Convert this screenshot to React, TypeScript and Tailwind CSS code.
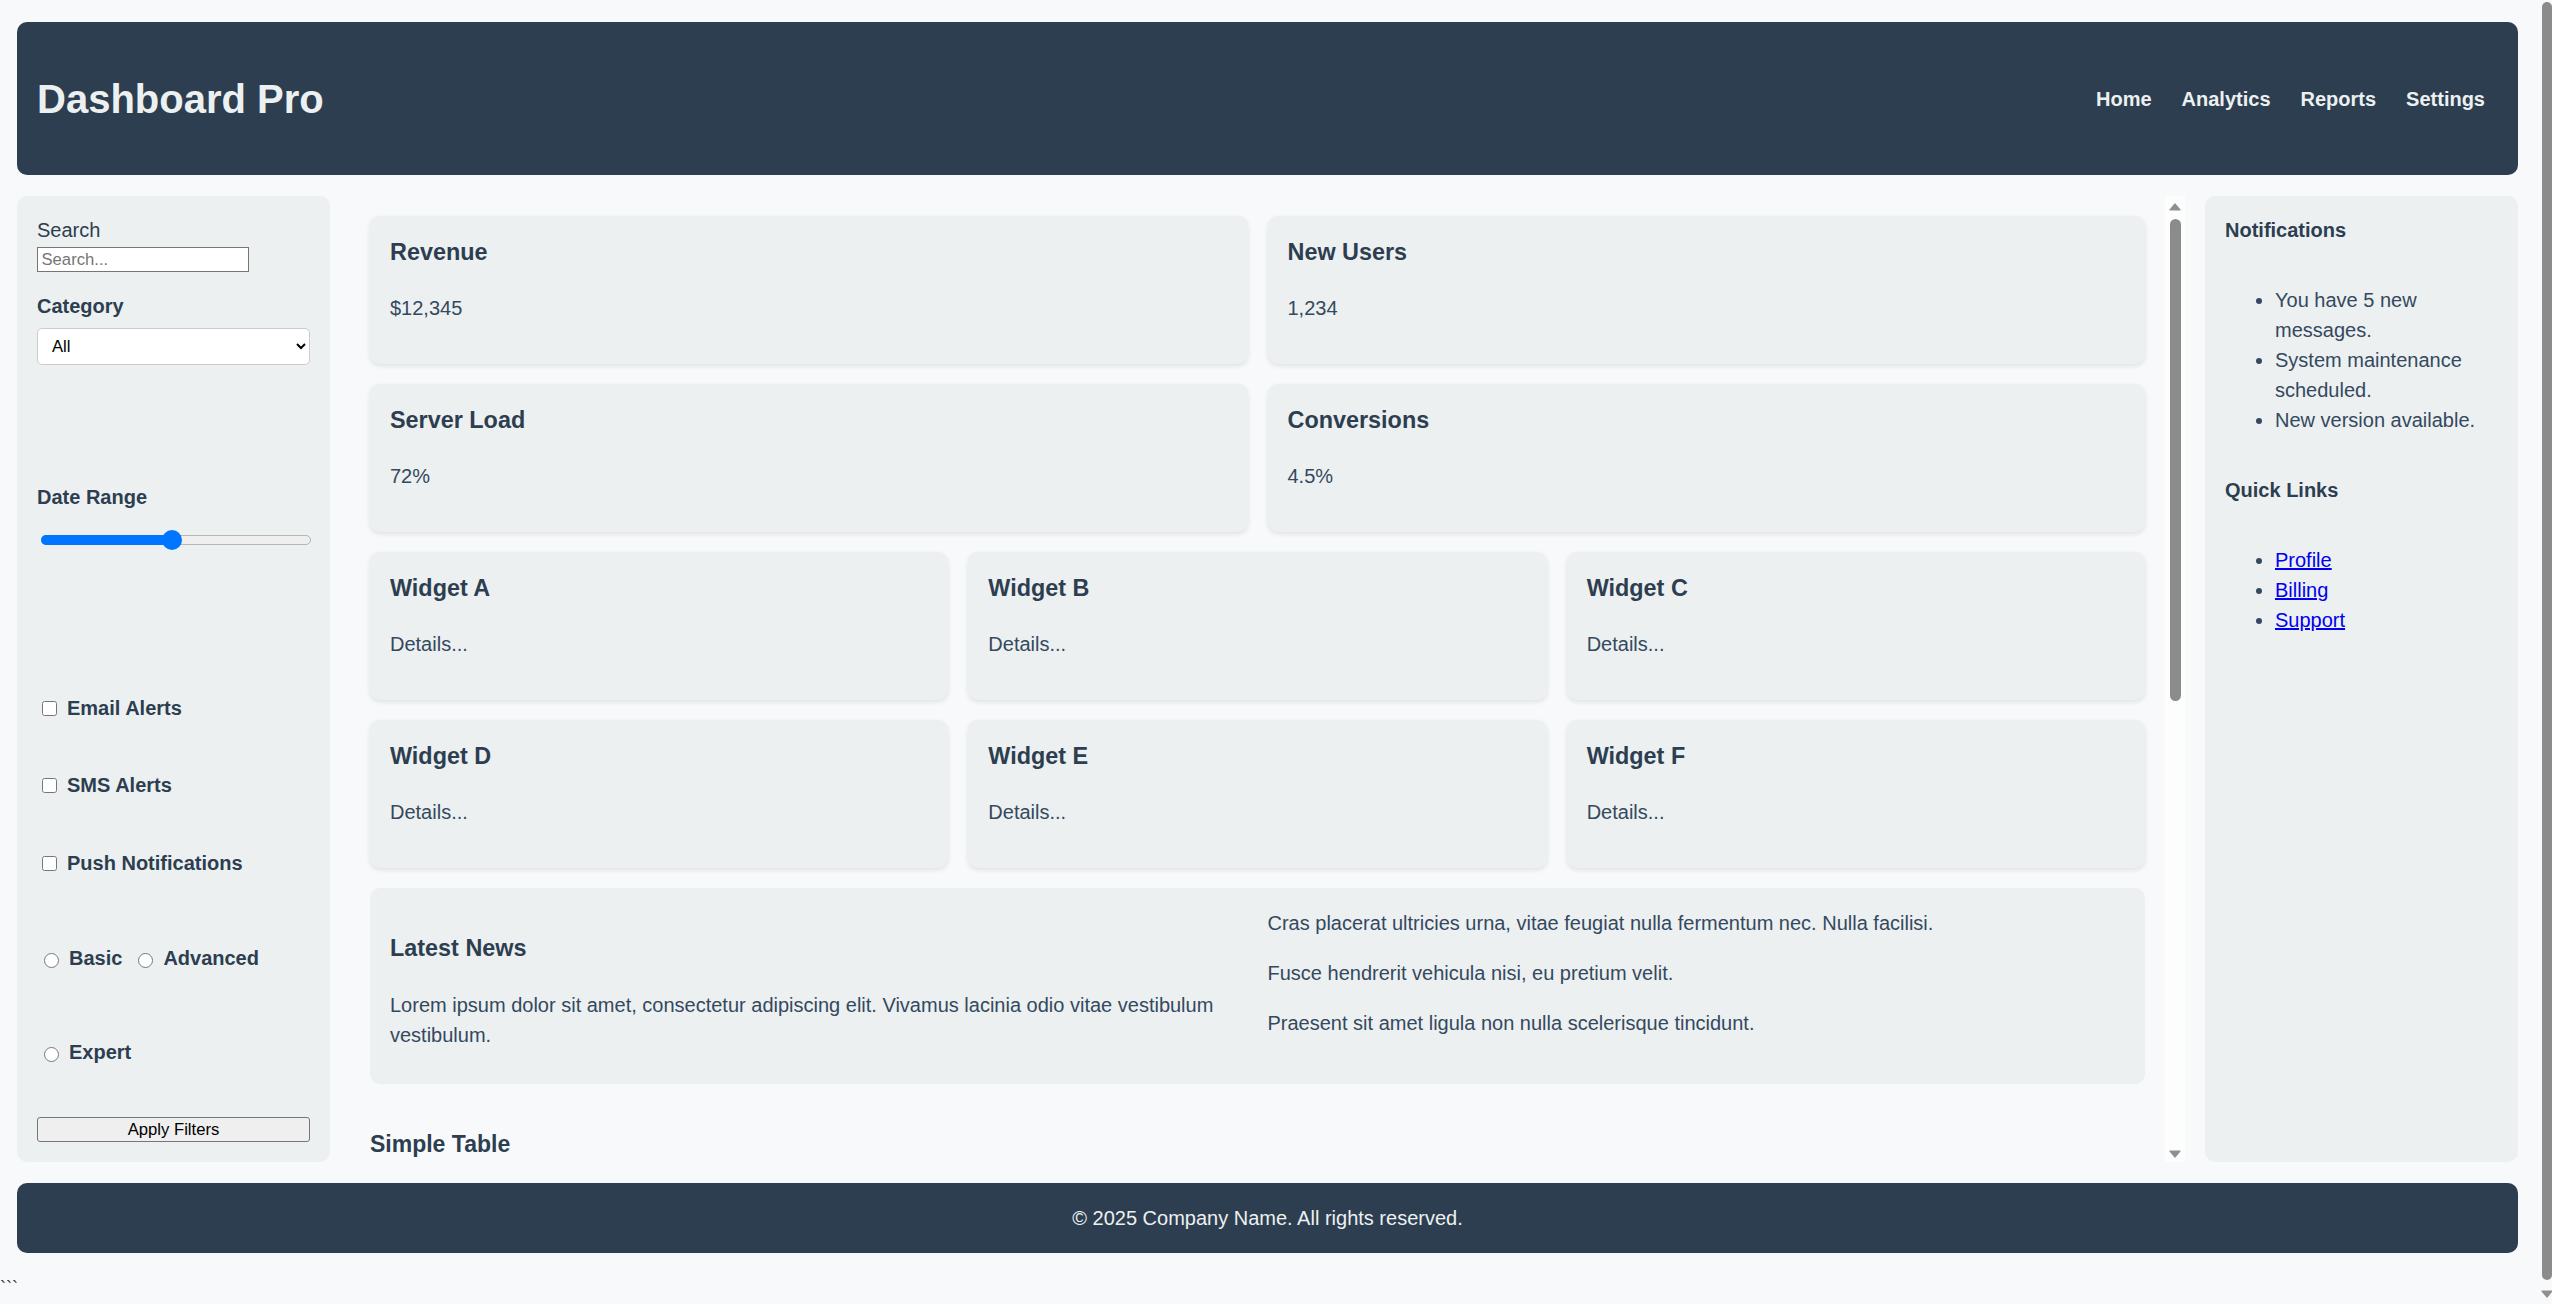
import React from 'react';

const navLinks = ['Home', 'Analytics', 'Reports', 'Settings'];

const statCards = [
  { title: 'Revenue', value: '$12,345' },
  { title: 'New Users', value: '1,234' },
  { title: 'Server Load', value: '72%' },
  { title: 'Conversions', value: '4.5%' },
];

const widgets = ['Widget A', 'Widget B', 'Widget C', 'Widget D', 'Widget E', 'Widget F'];

const tableRows = [
  ['1', 'Alice Johnson', 'Admin', 'Active'],
  ['2', 'Bob Smith', 'Editor', 'Active'],
  ['3', 'Carol White', 'Viewer', 'Inactive'],
  ['4', 'David Brown', 'Editor', 'Active'],
  ['5', 'Eve Davis', 'Viewer', 'Pending'],
  ['6', 'Frank Miller', 'Admin', 'Active'],
  ['7', 'Grace Lee', 'Viewer', 'Active'],
  ['8', 'Henry Wilson', 'Editor', 'Inactive'],
  ['9', 'Ivy Moore', 'Viewer', 'Active'],
  ['10', 'Jack Taylor', 'Editor', 'Pending'],
  ['11', 'Kate Anderson', 'Viewer', 'Active'],
  ['12', 'Liam Thomas', 'Admin', 'Active'],
  ['13', 'Mia Jackson', 'Viewer', 'Inactive'],
  ['14', 'Noah Martin', 'Editor', 'Active'],
  ['15', 'Olivia Clark', 'Viewer', 'Active'],
  ['16', 'Paul Lewis', 'Editor', 'Pending'],
  ['17', 'Quinn Walker', 'Viewer', 'Active'],
];

function ArrowUp({ className = '' }: { className?: string }) {
  return (
    <svg width="12" height="8" viewBox="0 0 12 8" className={className}>
      <path d="M6 1 L11 7 L1 7 Z" fill="#8f8f8f" stroke="#8f8f8f" strokeWidth="1.2" strokeLinejoin="round" />
    </svg>
  );
}

function ArrowDown({ className = '' }: { className?: string }) {
  return (
    <svg width="12" height="8" viewBox="0 0 12 8" className={className}>
      <path d="M1 1 L11 1 L6 7 Z" fill="#8f8f8f" stroke="#8f8f8f" strokeWidth="1.2" strokeLinejoin="round" />
    </svg>
  );
}

function StatCard({ title, value }: { title: string; value: string }) {
  return (
    <div className="rounded-[10px] bg-[#ecf0f1] px-[20px] pt-[19px] pb-[41px] shadow-[0_2px_5px_rgba(0,0,0,0.1)]">
      <h3 className="text-[23.4px] font-bold leading-[35px] text-[#2c3e50]">{title}</h3>
      <p className="mt-[23px] text-[20px] leading-[30px] text-[#34495e]">{value}</p>
    </div>
  );
}

function Sidebar() {
  return (
    <aside className="w-[313px] shrink-0 rounded-[10px] bg-[#ecf0f1] px-[20px] pt-[23px] text-[20px] leading-[23px] text-[#2c3e50]">
      <label className="block">Search</label>
      <input
        type="text"
        placeholder="Search..."
        className="mt-[5px] block h-[25px] w-[212px] border border-[#767676] bg-white px-[3.5px] text-[16.67px] text-black outline-none placeholder:text-[#757575]"
      />

      <label className="mt-[23px] block font-bold">Category</label>
      <select className="mt-[10px] block h-[37px] w-full rounded-[5px] border border-[#cccccc] bg-white pl-[10px] pr-[5px] text-[16.67px] text-black">
        <option>All</option>
        <option>Sales</option>
        <option>Marketing</option>
        <option>Support</option>
      </select>

      <label className="mt-[121px] block font-bold">Date Range</label>
      <div role="slider" aria-valuenow={50} className="relative mt-[21px] ml-[4px] h-[20px] w-[270px]">
        <div className="absolute inset-x-0 top-[5px] h-[10px] rounded-full border border-[#b5b5b5] bg-[#efefef]" />
        <div className="absolute left-0 top-[5px] h-[10px] w-[131px] rounded-full bg-[#0075ff]" />
        <div className="absolute left-[121px] top-0 h-[20px] w-[20px] rounded-full bg-[#0075ff]" />
      </div>

      <label className="mt-[147px] flex items-center font-bold">
        <input type="checkbox" className="ml-[5px] mr-[10px] h-[15px] w-[15px]" />
        Email Alerts
      </label>
      <label className="mt-[54px] flex items-center font-bold">
        <input type="checkbox" className="ml-[5px] mr-[10px] h-[15px] w-[15px]" />
        SMS Alerts
      </label>
      <label className="mt-[55px] flex items-center font-bold">
        <input type="checkbox" className="ml-[5px] mr-[10px] h-[15px] w-[15px]" />
        Push Notifications
      </label>

      <div className="mt-[72px] flex items-center font-bold">
        <input type="radio" name="level" className="ml-[7px] mr-[10px] mt-[3px] h-[15px] w-[15px]" />
        <span>Basic</span>
        <input type="radio" name="level" className="ml-[16px] mr-[10px] mt-[3px] h-[15px] w-[15px]" />
        <span>Advanced</span>
      </div>
      <div className="mt-[71px] flex items-center font-bold">
        <input type="radio" name="level" className="ml-[7px] mr-[10px] mt-[3px] h-[15px] w-[15px]" />
        <span>Expert</span>
      </div>

      <button className="mt-[53px] block h-[25px] w-full rounded-[3px] border border-[#767676] bg-[#efefef] text-[16.67px] text-black">
        Apply Filters
      </button>
    </aside>
  );
}

function RightPanel() {
  return (
    <aside className="w-[313px] shrink-0 rounded-[10px] bg-[#ecf0f1] px-[20px] pt-[23px] text-[20px] text-[#34495e]">
      <h4 className="font-bold leading-[23px] text-[#2c3e50]">Notifications</h4>
      <ul className="mt-[43px] list-disc pl-[50px] leading-[30px]">
        <li>You have 5 new messages.</li>
        <li>System maintenance scheduled.</li>
        <li>New version available.</li>
      </ul>
      <h4 className="mt-[44px] font-bold leading-[23px] text-[#2c3e50]">Quick Links</h4>
      <ul className="mt-[43px] list-disc pl-[50px] leading-[30px]">
        <li><a href="#" className="text-[#0000ee] underline">Profile</a></li>
        <li><a href="#" className="text-[#0000ee] underline">Billing</a></li>
        <li><a href="#" className="text-[#0000ee] underline">Support</a></li>
      </ul>
    </aside>
  );
}

export default function App() {
  return (
    <div className="flex h-screen bg-[#f8f9fa] font-['Liberation_Sans',Arial,sans-serif] text-[#2c3e50]">
      <div className="min-w-0 flex-1 overflow-y-auto">
        <div className="px-[17px] pt-[22px]">
          <header className="flex h-[153px] items-center justify-between rounded-[10px] bg-[#2c3e50] pl-[20px] pr-[33px] text-[#ecf0f1]">
            <h1 className="text-[40px] font-bold leading-[46px]">Dashboard Pro</h1>
            <nav className="flex gap-[30px] text-[20px] font-bold">
              {navLinks.map((l) => (
                <a key={l} href="#">{l}</a>
              ))}
            </nav>
          </header>

          <div className="mt-[21px] flex h-[966px] gap-[20px]">
            <Sidebar />

            <div className="flex min-w-0 flex-1">
              <main className="min-w-0 flex-1 overflow-y-auto px-[20px] pt-[20px] pb-[20px]">
                <div className="grid grid-cols-2 gap-[20px]">
                  {statCards.map((c) => (
                    <StatCard key={c.title} title={c.title} value={c.value} />
                  ))}
                </div>
                <div className="mt-[20px] grid grid-cols-3 gap-[20px]">
                  {widgets.map((w) => (
                    <StatCard key={w} title={w} value="Details..." />
                  ))}
                </div>

                <section className="mt-[20px] grid h-[196px] grid-cols-2 gap-[20px] rounded-[10px] bg-[#ecf0f1] px-[20px] text-[20px] leading-[30px] text-[#34495e]">
                  <div className="pt-[43px]">
                    <h3 className="text-[23.4px] font-bold leading-[35px] text-[#2c3e50]">Latest News</h3>
                    <p className="mt-[24px]">
                      Lorem ipsum dolor sit amet, consectetur adipiscing elit. Vivamus lacinia odio vitae vestibulum vestibulum.
                    </p>
                  </div>
                  <div className="flex flex-col gap-[20px] pt-[20px]">
                    <p>Cras placerat ultricies urna, vitae feugiat nulla fermentum nec. Nulla facilisi.</p>
                    <p>Fusce hendrerit vehicula nisi, eu pretium velit.</p>
                    <p>Praesent sit amet ligula non nulla scelerisque tincidunt.</p>
                  </div>
                </section>

                <h2 className="mt-[43px] text-[23px] font-bold leading-[35px] text-[#2c3e50]">Simple Table</h2>
                <table className="mt-[23px] w-full border-collapse text-left text-[20px] leading-[23px] text-[#34495e]">
                  <thead>
                    <tr className="border-b border-[#dddddd] bg-[#ecf0f1]">
                      <th className="px-[12px] py-[12px] font-bold">ID</th>
                      <th className="px-[12px] py-[12px] font-bold">Name</th>
                      <th className="px-[12px] py-[12px] font-bold">Role</th>
                      <th className="px-[12px] py-[12px] font-bold">Status</th>
                    </tr>
                  </thead>
                  <tbody>
                    {tableRows.map((r) => (
                      <tr key={r[0]} className="border-b border-[#dddddd]">
                        {r.map((cell, i) => (
                          <td key={i} className="px-[12px] py-[12px]">{cell}</td>
                        ))}
                      </tr>
                    ))}
                  </tbody>
                </table>
              </main>

              {/* scrollbar of the content pane */}
              <div aria-hidden className="flex w-[20px] shrink-0 flex-col items-center bg-[#fdfdfd]">
                <ArrowUp className="mt-[7px]" />
                <div className="mt-[8px] h-[482px] w-[11px] rounded-full bg-[#8b8b8b]" />
                <div className="flex-1" />
                <ArrowDown className="mb-[4px]" />
              </div>
            </div>

            <RightPanel />
          </div>

          <footer className="mt-[21px] flex h-[70px] items-center justify-center rounded-[10px] bg-[#2c3e50] text-[20px] text-[#ecf0f1]">
            © 2025 Company Name. All rights reserved.
          </footer>
        </div>
        <p className="mt-[24px] pb-[11px] text-[18px] leading-[23px] text-[#2c3e50]">```</p>
      </div>

      {/* page scrollbar */}
      <div aria-hidden className="flex w-[17px] shrink-0 flex-col items-end bg-[#f8f9fa]">
        <div className="mt-[2px] h-[1278px] w-[10px] rounded-full bg-[#8b8b8b]" />
        <div className="flex-1" />
        <ArrowDown className="mb-[6px] mr-[-1px]" />
      </div>
    </div>
  );
}
